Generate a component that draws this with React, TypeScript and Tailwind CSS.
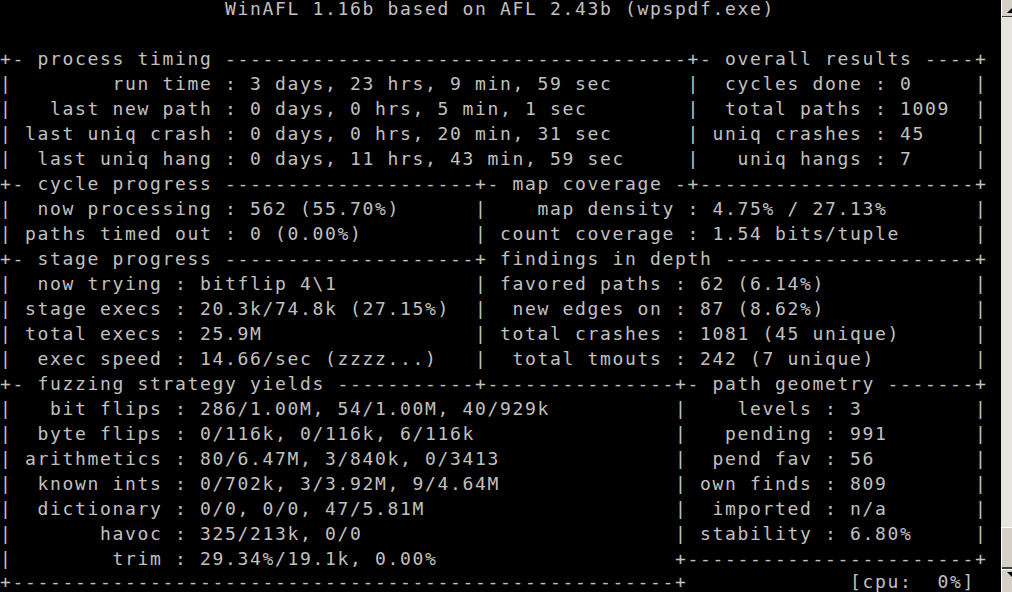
import React from 'react';

const COLS = 79;

// place text segments at fixed character columns
const line = (parts: [number, string][]): string => {
  const chars = Array(COLS).fill(' ');
  for (const [col, text] of parts) {
    for (let i = 0; i < text.length; i++) chars[col + i] = text[i];
  }
  return chars.join('').replace(/\s+$/, '');
};

const dash = (n: number) => '-'.repeat(n);

const rows: string[] = [
  line([[18, 'WinAFL 1.16b based on AFL 2.43b (wpspdf.exe)']]),
  '',
  '+- process timing ' + dash(37) + '+- overall results ' + dash(4) + '+',
  line([[0, '|'], [9, 'run time : 3 days, 23 hrs, 9 min, 59 sec'], [55, '|'], [58, 'cycles done : 0'], [78, '|']]),
  line([[0, '|'], [4, 'last new path : 0 days, 0 hrs, 5 min, 1 sec'], [55, '|'], [58, 'total paths : 1009'], [78, '|']]),
  line([[0, '|'], [2, 'last uniq crash : 0 days, 0 hrs, 20 min, 31 sec'], [55, '|'], [57, 'uniq crashes : 45'], [78, '|']]),
  line([[0, '|'], [3, 'last uniq hang : 0 days, 11 hrs, 43 min, 59 sec'], [55, '|'], [59, 'uniq hangs : 7'], [78, '|']]),
  '+- cycle progress ' + dash(20) + '+- map coverage -+' + dash(22) + '+',
  line([[0, '|'], [3, 'now processing : 562 (55.70%)'], [38, '|'], [43, 'map density : 4.75% / 27.13%'], [78, '|']]),
  line([[0, '|'], [2, 'paths timed out : 0 (0.00%)'], [38, '|'], [40, 'count coverage : 1.54 bits/tuple'], [78, '|']]),
  '+- stage progress ' + dash(20) + '+ findings in depth ' + dash(20) + '+',
  line([[0, '|'], [3, 'now trying : bitflip 4\\1'], [38, '|'], [40, 'favored paths : 62 (6.14%)'], [78, '|']]),
  line([[0, '|'], [2, 'stage execs : 20.3k/74.8k (27.15%)'], [38, '|'], [41, 'new edges on : 87 (8.62%)'], [78, '|']]),
  line([[0, '|'], [2, 'total execs : 25.9M'], [38, '|'], [40, 'total crashes : 1081 (45 unique)'], [78, '|']]),
  line([[0, '|'], [3, 'exec speed : 14.66/sec (zzzz...)'], [38, '|'], [41, 'total tmouts : 242 (7 unique)'], [78, '|']]),
  '+- fuzzing strategy yields ' + dash(11) + '+' + dash(15) + '+- path geometry ' + dash(7) + '+',
  line([[0, '|'], [4, 'bit flips : 286/1.00M, 54/1.00M, 40/929k'], [54, '|'], [59, 'levels : 3'], [78, '|']]),
  line([[0, '|'], [3, 'byte flips : 0/116k, 0/116k, 6/116k'], [54, '|'], [58, 'pending : 991'], [78, '|']]),
  line([[0, '|'], [2, 'arithmetics : 80/6.47M, 3/840k, 0/3413'], [54, '|'], [57, 'pend fav : 56'], [78, '|']]),
  line([[0, '|'], [3, 'known ints : 0/702k, 3/3.92M, 9/4.64M'], [54, '|'], [56, 'own finds : 809'], [78, '|']]),
  line([[0, '|'], [3, 'dictionary : 0/0, 0/0, 47/5.81M'], [54, '|'], [57, 'imported : n/a'], [78, '|']]),
  line([[0, '|'], [8, 'havoc : 325/213k, 0/0'], [54, '|'], [56, 'stability : 6.80%'], [78, '|']]),
  line([[0, '|'], [9, 'trim : 29.34%/19.1k, 0.00%'], [54, '+' + dash(23) + '+']]),
  line([[0, '+' + dash(53) + '+'], [68, '[cpu:  0%]']]),
];

// first and last console rows are clipped by the window edge
const rowClass = (i: number) =>
  i === 0
    ? 'h-[21px] leading-[17px] whitespace-pre'
    : i === rows.length - 1
      ? 'h-[21px] leading-[22px] whitespace-pre'
      : 'h-[25px] leading-[25px] whitespace-pre';

const ScrollBar: React.FC = () => (
  <div className="w-[11px] h-[592px] flex flex-col bg-[#e6e4df]">
    {/* up button */}
    <div className="h-[17px] shrink-0 bg-[#d4d0c8] border-l border-[#ffffff] relative">
      <div className="absolute left-0 right-0 bottom-0 h-px bg-[#404040]" />
      <svg className="absolute left-0 top-0" width="11" height="16" viewBox="0 0 11 16">
        <polygon points="5,13 11,7 11,13" fill="#000000" />
      </svg>
    </div>
    {/* track */}
    <div className="h-[510px] shrink-0 bg-[#e6e4df]" />
    {/* thumb */}
    <div className="h-[42px] shrink-0 bg-[#d4d0c8] border-t border-l border-[#ffffff] relative">
      <div className="absolute left-0 right-0 bottom-0 h-[2px] bg-[#404040]" />
    </div>
    {/* down button */}
    <div className="h-[23px] shrink-0 bg-[#d4d0c8] border-t border-l border-[#ffffff] relative">
      <svg className="absolute left-0 top-0" width="11" height="12" viewBox="0 0 11 12">
        <polygon points="5,2 11,2 11,8" fill="#000000" />
      </svg>
    </div>
  </div>
);

const App: React.FC = () => (
  <div className="w-[1012px] h-[592px] bg-black flex overflow-hidden">
    {/* console text */}
    <div className="w-[1001px] shrink-0 overflow-hidden font-['DejaVu_Sans_Mono',monospace] text-[18px] tracking-[1.663px] text-[#c0c0c0]">
      {rows.map((r, i) => (
        <div key={i} className={rowClass(i)}>
          {r}
        </div>
      ))}
    </div>
    <ScrollBar />
  </div>
);

export default App;
